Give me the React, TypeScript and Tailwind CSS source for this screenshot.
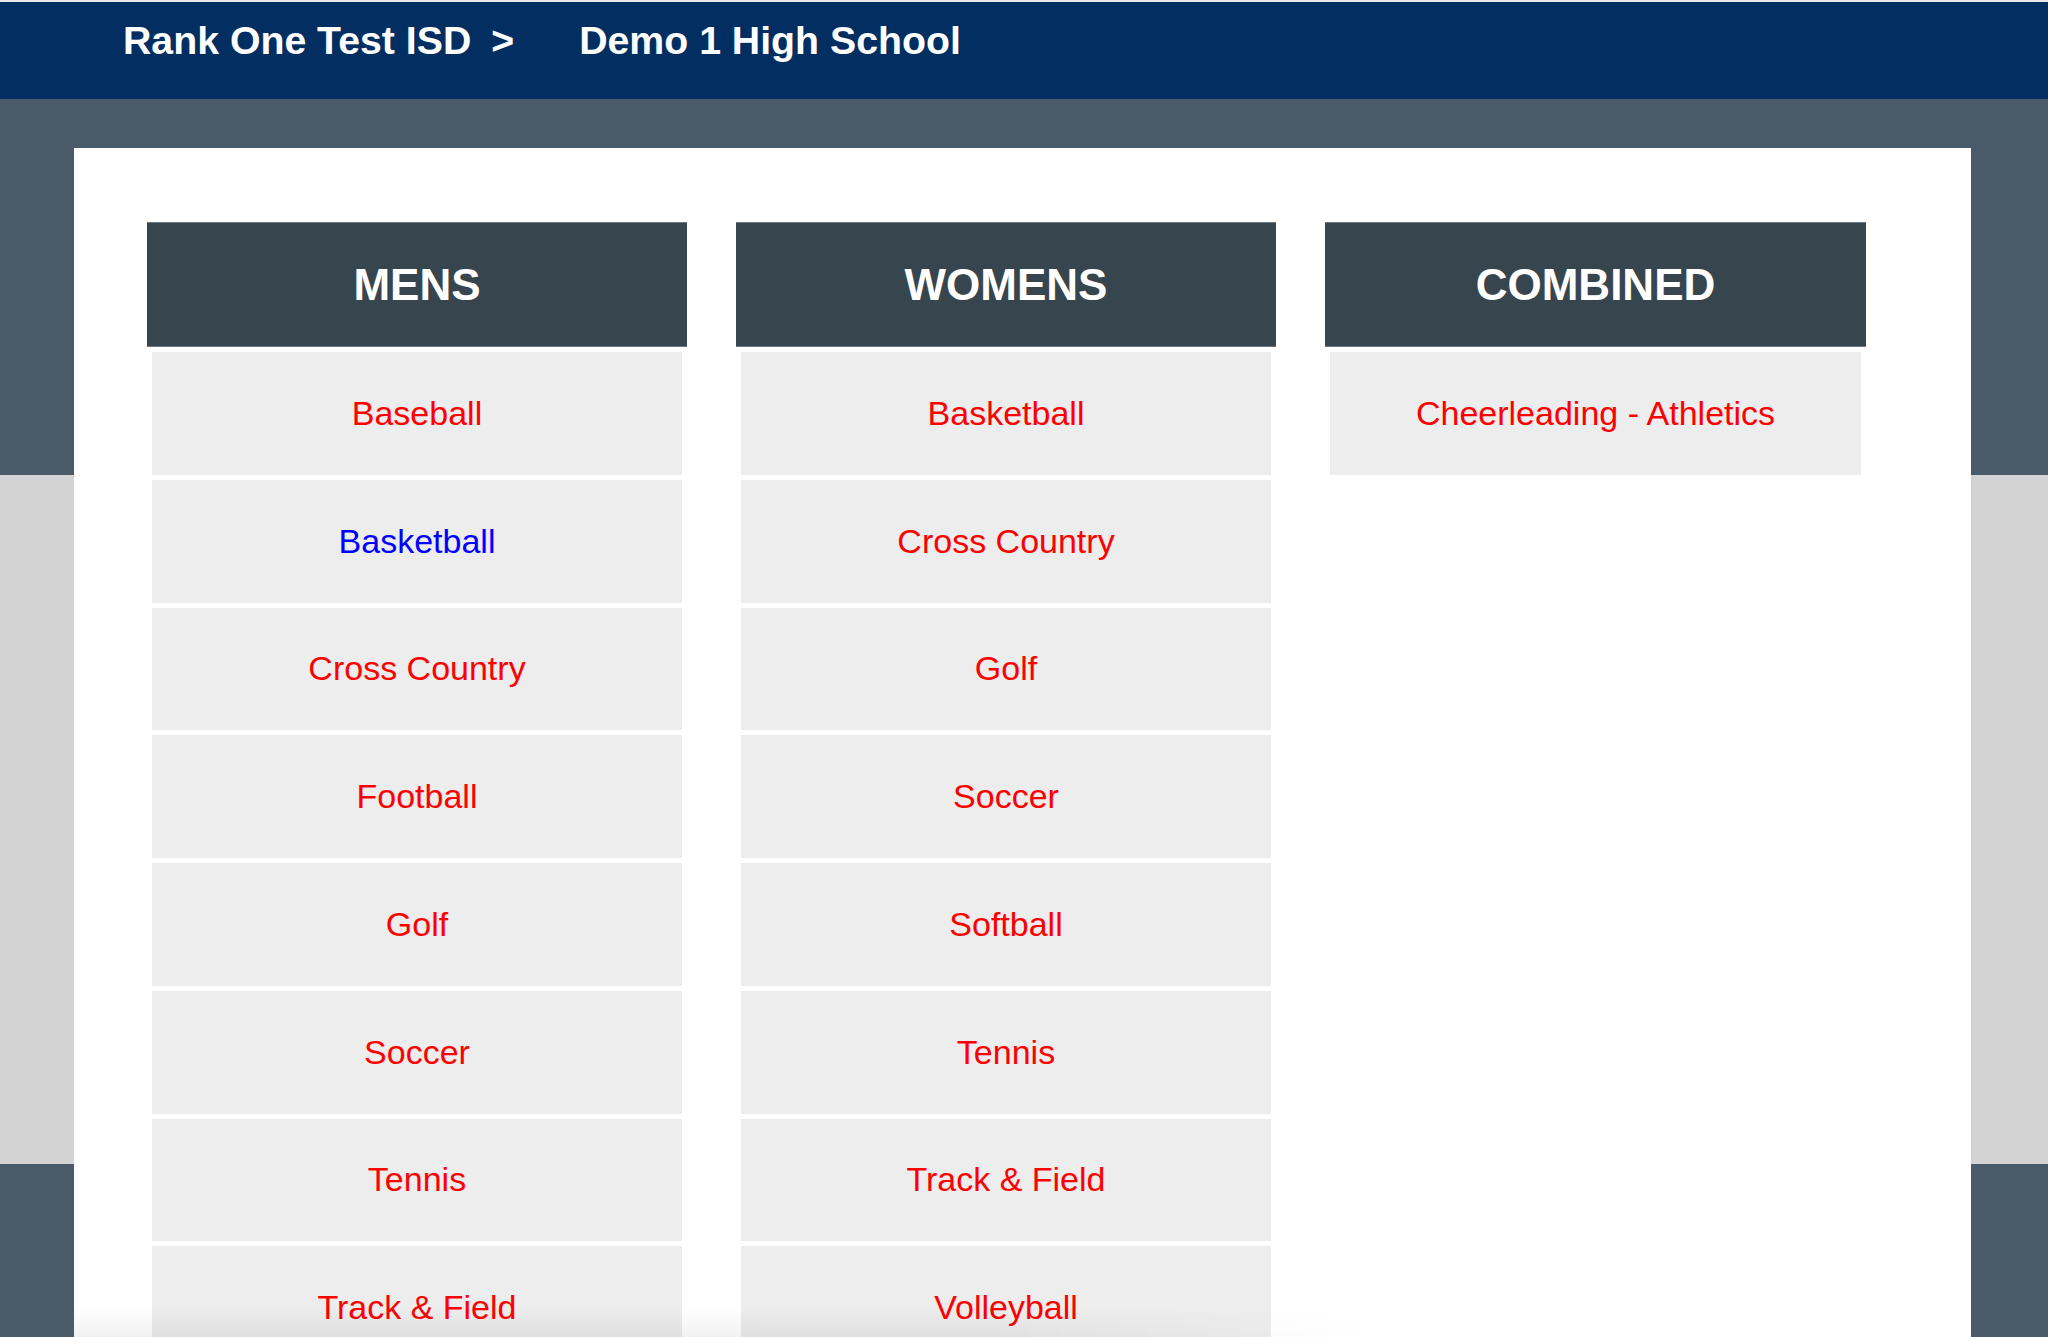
import React from 'react';

const columns = [
  {
    title: 'MENS',
    sports: ['Baseball', 'Basketball', 'Cross Country', 'Football', 'Golf', 'Soccer', 'Tennis', 'Track & Field'],
  },
  {
    title: 'WOMENS',
    sports: ['Basketball', 'Cross Country', 'Golf', 'Soccer', 'Softball', 'Tennis', 'Track & Field', 'Volleyball'],
  },
  {
    title: 'COMBINED',
    sports: ['Cheerleading - Athletics'],
  },
];

export default function App() {
  return (
    <div className="min-h-screen bg-white font-['Liberation_Sans',Arial,sans-serif] relative overflow-hidden h-[1337px]">
      {/* top bar */}
      <div className="h-[2px] bg-[#e9e6ea]" />
      <header className="h-[97px] bg-[#022e61] text-white font-bold text-[39.25px] leading-none pt-[19px] pl-[123px] flex items-start">
        <span>Rank One Test ISD</span>
        <span className="ml-[20px]">&gt;</span>
        <span className="ml-[65px]">Demo 1 High School</span>
      </header>

      {/* banded background */}
      <main className="bg-[linear-gradient(to_bottom,#4b5a69_376px,#d3d3d3_376px,#d3d3d3_1065px,#4b5a69_1065px)] pt-[49px] pl-[74px] pr-[77px] min-h-[1238px]">
        <div className="bg-white pt-[74px] pl-[73px] min-h-[1200px]">
          <div className="grid grid-cols-[540px_540px_541px] gap-x-[49px] items-start">
            {columns.map((col) => (
              <div key={col.title} className="flex flex-col">
                <div className="h-[125px] bg-[#37454f] border-t border-b border-[#6c7781] flex items-center justify-center">
                  <h2 className="text-white font-bold text-[44px] leading-none">{col.title}</h2>
                </div>
                <ul className="flex flex-col gap-[5px] px-[5px] pt-[5px]">
                  {col.sports.map((s, i) => (
                    <li
                      key={s}
                      className="h-[122.75px] bg-[#ededed] flex items-center justify-center"
                    >
                      <a
                        className={
                          col.title === 'MENS' && i === 1
                            ? 'text-[34px] text-[#0000ff]'
                            : 'text-[34px] text-[#ff0000]'
                        }
                      >
                        {s}
                      </a>
                    </li>
                  ))}
                </ul>
              </div>
            ))}
          </div>
        </div>
      </main>

      {/* faint scroll shadow at the bottom edge */}
      <div className="pointer-events-none absolute left-[74px] bottom-0 w-[1300px] h-[30px] bg-[linear-gradient(to_right,rgba(0,0,0,0.06),rgba(0,0,0,0.05)_70%,transparent)] [mask-image:linear-gradient(to_bottom,transparent,black)]" />
    </div>
  );
}
